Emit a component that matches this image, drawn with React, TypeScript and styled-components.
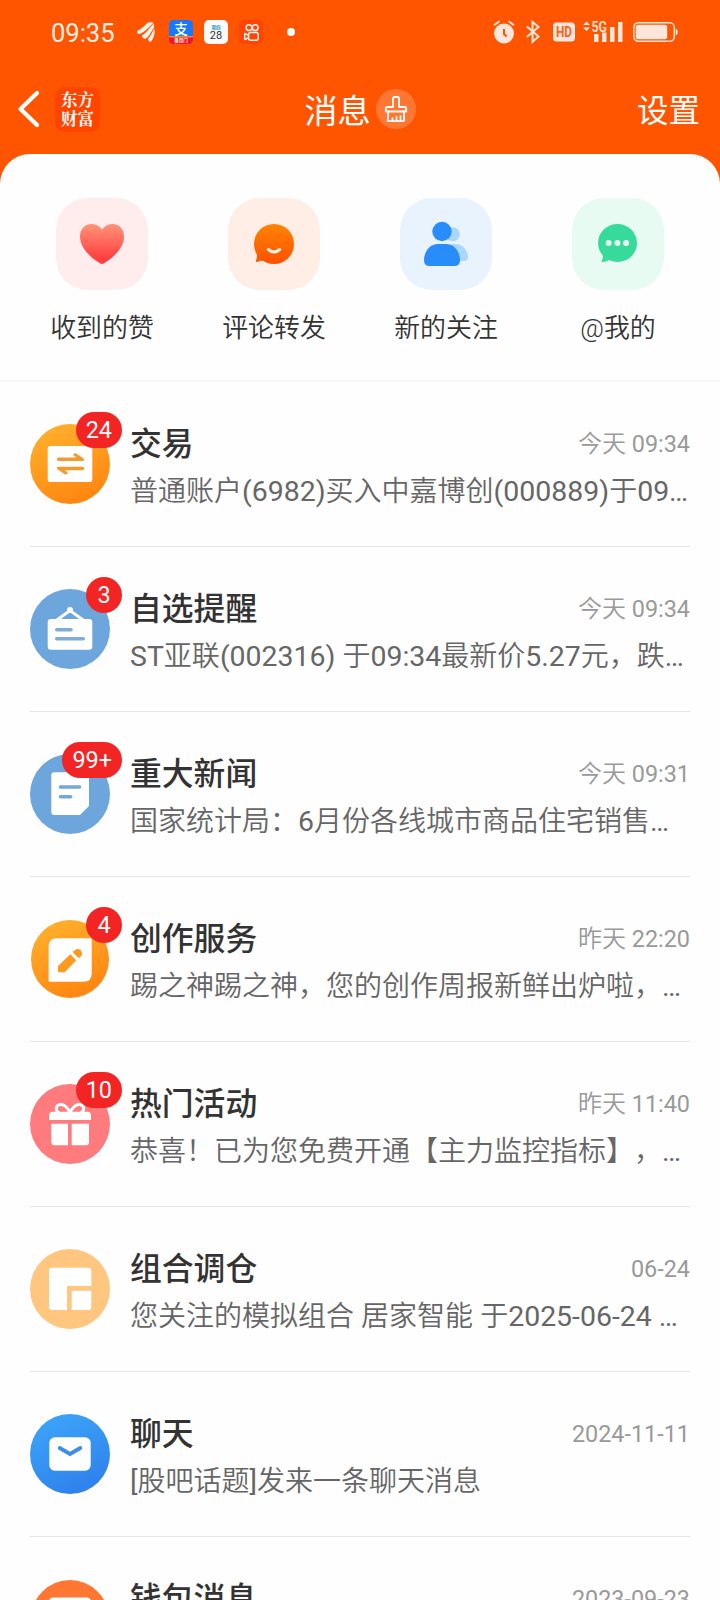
import React from 'react';
import styled, { createGlobalStyle } from 'styled-components';

const GlobalStyle = createGlobalStyle`
  * { box-sizing: border-box; }
  html, body { margin: 0; padding: 0; }
  body {
    background: #fefefe;
    font-family: Roboto, 'Noto Sans CJK SC', sans-serif;
    text-spacing-trim: space-all;
    overflow: hidden;
  }
  svg { display: block; flex: none; overflow: visible; }
`;

const Screen = styled.main`
  width: 720px;
  height: 1600px;
  overflow: hidden;
  display: flex;
  flex-direction: column;
  background: #ff5500;
`;

const StatusBar = styled.div`
  height: 64px;
  flex: none;
  display: flex;
  align-items: center;
  justify-content: space-between;
  padding: 0 42px 0 51px;
`;

const StatusGroup = styled.div<{ $gap: number }>`
  display: flex;
  align-items: center;
  gap: ${(p) => p.$gap}px;
`;

const StatusSlot = styled.span<{ $before?: number; $after?: number }>`
  padding-left: ${(p) => p.$before ?? 0}px;
  padding-right: ${(p) => p.$after ?? 0}px;
`;

const Clock = styled.span`
  width: 75px;
  font-size: 25.5px;
  line-height: 30px;
  color: #fff0e6;
  padding-top: 1px;
`;

const NavBar = styled.header`
  height: 90px;
  flex: none;
  display: grid;
  grid-template-columns: 1fr auto 1fr;
  align-items: center;
  padding: 0 20px 0 17px;
  color: #fff;
`;

const NavLeft = styled.div`
  display: flex;
  align-items: center;
  gap: 15px;
`;

const BrandLogo = styled.div`
  width: 45px;
  height: 45px;
  border-radius: 10px;
  background: #ff4400;
  display: flex;
  flex-direction: column;
  align-items: center;
  justify-content: center;
  padding-bottom: 1px;
  font: 700 16.5px/19px 'Noto Serif CJK SC', 'Noto Sans CJK SC', sans-serif;
`;

const NavTitle = styled.div`
  display: flex;
  align-items: center;
  gap: 5px;
  padding-left: 3px;
  font-size: 33.3px;
  line-height: 40px;
`;

const NavText = styled.span`
  padding-top: 5px;
`;

const BrushButton = styled.span`
  width: 40px;
  height: 40px;
  border-radius: 50%;
  background: #ff7733;
`;

const SettingsLink = styled.span`
  justify-self: end;
  padding-top: 5px;
  font-size: 31.5px;
  line-height: 40px;
`;

const Sheet = styled.section`
  flex: 1;
  min-height: 0;
  background: #fefefe;
  border-radius: 30px 30px 0 0;
  overflow: hidden;
`;

const Actions = styled.nav`
  display: grid;
  grid-template-columns: repeat(4, 172px);
  padding: 44px 16px 0;
  height: 228px;
  border-bottom: 2px solid #f6f6f6;
`;

const Action = styled.div`
  display: flex;
  flex-direction: column;
  align-items: center;
  gap: 20px;
`;

const ActionTile = styled.div<{ $bg: string }>`
  width: 92px;
  height: 92px;
  border-radius: 32px;
  background: ${(p) => p.$bg};
`;

const ActionLabel = styled.span`
  font-size: 25.9px;
  line-height: 36px;
  font-weight: 350;
  color: #333;
`;

const Row = styled.article`
  height: 165px;
  margin: 0 30px;
  padding-top: 42px;
  display: flex;
  gap: 20px;
  border-bottom: 1px solid #e6e6e6;
`;

const Avatar = styled.div`
  position: relative;
  width: 80px;
  height: 80px;
  flex: none;
`;

const Badge = styled.span`
  position: absolute;
  right: -12px;
  top: -12px;
  min-width: 36px;
  height: 36px;
  padding: 0 10px;
  border-radius: 18px;
  background: #f22424;
  color: #fff;
  font-size: 23.4px;
  line-height: 36px;
  text-align: center;
`;

const RowBody = styled.div`
  flex: 1;
  min-width: 0;
  display: flex;
  flex-direction: column;
`;

const RowHead = styled.div`
  display: flex;
  justify-content: space-between;
  align-items: center;
  height: 40px;
`;

const RowTitle = styled.h2`
  margin: 0;
  font-size: 31.8px;
  line-height: 40px;
  font-weight: 500;
  color: #333;
`;

const RowTime = styled.time`
  font-size: 24px;
  line-height: 40px;
  font-weight: 350;
  color: #999;
`;

const Preview = styled.p`
  margin: 7px 0 0;
  font-size: 28px;
  line-height: 42px;
  font-weight: 350;
  color: #666;
  white-space: pre;
`;

const Latin = styled.span<{ $size: number }>`
  font-size: ${(p) => p.$size}px;
  font-weight: 400;
`;

/* Latin letters and digits have their own size beside the Chinese text. */
const Mixed = ({ text, size }: { text: string; size: number }) => (
  <>
    {text.split(/([\x20-\x7e…]+)/).map((part, i) =>
      i % 2 ? (
        <Latin key={i} $size={size}>
          {part}
        </Latin>
      ) : (
        part
      ),
    )}
  </>
);

const pale = '#ffe6da';

const WingIcon = () => (
  <svg width="18" height="20" viewBox="0 0 18 20" fill="#fff0e8">
    <path d="M0 9C4 7.500 8 3 11 .5C13 0 15.500 .3 16.500 .8C12.500 4.500 8.500 9.500 3 12C.8 12.200 -.3 11 0 9z" />
    <path d="M5 13.500C10 10.500 12.500 5.500 16.800 1.500L17.200 5.500C14 9.500 12.500 14.500 8.500 16.800C6.500 17 4.800 15.500 5 13.500z" />
    <path d="M11 17C14 14 15 10.500 17.200 6.800L17.700 11C16.700 14 16.500 17 14 19.600C12 19.800 11 18.800 11 17z" />
  </svg>
);

const AlipayIcon = () => (
  <svg width="24" height="24" viewBox="0 0 24 24">
    <defs>
      <clipPath id="pay">
        <rect width="24" height="24" rx="4.500" />
      </clipPath>
    </defs>
    <g clipPath="url(#pay)">
      <rect width="24" height="24" fill="#1677ff" />
      <rect y="16" width="24" height="8" fill="#f5132a" />
      <path d="M0 16H24V17.200Q12 18.500 0 17.200z" fill="#f08a3c" />
      <text x="12" y="14" fontSize="13.500" fontWeight="500" fill="#fff" textAnchor="middle">支</text>
      <text x="12" y="22.300" fontSize="4.500" fontWeight="700" fill="#ffe9d0" textAnchor="middle">备用门</text>
    </g>
  </svg>
);

const CalendarIcon = () => (
  <svg width="24" height="24" viewBox="0 0 24 24">
    <rect width="24" height="24" rx="5" fill="#fafafa" />
    <text x="12" y="8.600" fontSize="4.500" fontWeight="700" fill="#1f8fc0" textAnchor="middle">周四</text>
    <text x="12" y="19" fontSize="11" fill="#333" textAnchor="middle">28</text>
  </svg>
);

const CameraIcon = () => (
  <svg width="24" height="24" viewBox="0 0 24 24" fill="none" stroke="#fff0e8" strokeWidth="1.500">
    <rect width="24" height="24" rx="5" fill="#ff4406" stroke="none" />
    <circle cx="10" cy="7.700" r="2.900" />
    <circle cx="16.200" cy="7.700" r="2.900" />
    <rect x="9.600" y="12.600" width="9.600" height="7.700" rx="2" />
    <path d="M9.500 15.200L5.700 13.500V19.500L9.500 17.800" strokeLinejoin="round" />
  </svg>
);

const DotIcon = () => (
  <svg width="8" height="8" viewBox="0 0 8 8">
    <circle cx="4" cy="4" r="4" fill="#fff" />
  </svg>
);

const AlarmIcon = () => (
  <svg width="22" height="24" viewBox="0 0 22 24">
    <circle cx="11" cy="13.500" r="10" fill={pale} />
    <path d="M1 5.200L6.500 1.200M21 5.200L15.500 1.200" stroke={pale} strokeWidth="1.800" />
    <path d="M11 9V14L13.700 16.500" stroke="#ff5500" strokeWidth="2" fill="none" />
  </svg>
);

const BluetoothIcon = () => (
  <svg width="14" height="24" viewBox="0 0 14 24" fill="none" stroke={pale} strokeWidth="2">
    <path d="M.8 6.500L12.500 16.500L6.500 21.800V2L12.500 7L.8 17" />
  </svg>
);

const HdIcon = () => (
  <svg width="22" height="20" viewBox="0 0 22 20">
    <rect y=".5" width="22" height="19" rx="3.500" fill={pale} />
    <text x="11" y="15.300" fontSize="15" fontWeight="700" fill="#f8631c" textAnchor="middle" textLength="16" lengthAdjust="spacingAndGlyphs">
      HD
    </text>
  </svg>
);

const SignalIcon = () => (
  <svg width="40" height="24" viewBox="0 0 40 24" fill={pale}>
    <path d="M0 5L3.500 1.500L7 5zM0 7.500L3.500 11L7 7.500z" />
    <text x="8.500" y="11.500" fontSize="14" fontWeight="600" textLength="15.500" lengthAdjust="spacingAndGlyphs">
      5G
    </text>
    <rect x="11" y="14" width="4.500" height="8" />
    <rect x="19" y="12.500" width="4.500" height="9.500" />
    <rect x="27" y="7" width="4.500" height="15" />
    <rect x="35" y="2" width="4.500" height="20" />
  </svg>
);

const BatteryIcon = () => (
  <svg width="45" height="20" viewBox="0 0 45 20">
    <rect x=".8" y=".8" width="40.500" height="18.400" rx="4.500" fill="none" stroke={pale} strokeWidth="1.500" />
    <rect x="2.700" y="2.700" width="31.500" height="14.600" rx="2.500" fill={pale} />
    <path d="M42.700 6.500Q44.800 7 44.800 10T42.700 13.500z" fill={pale} />
  </svg>
);

const BackIcon = () => (
  <svg width="23" height="38" viewBox="0 0 23 38" fill="none" stroke="#fff" strokeWidth="4.300" strokeLinecap="round" strokeLinejoin="round">
    <path d="M20 3L3.500 19L20 35" />
  </svg>
);

const BrushIcon = () => (
  <svg width="40" height="40" viewBox="0 0 40 40" fill="none" stroke="#fff" strokeWidth="1.800" strokeLinejoin="round" strokeLinecap="round">
    <path d="M17 18V9.500Q17 8 18.500 8H21.500Q23 8 23 9.500V18H28.500Q30.200 18 30.200 19.700V22.500H9.800V19.700Q9.800 18 11.500 18z" />
    <path d="M12.200 22.500L11.700 32.200H26.500Q28.300 32.200 28.200 30.500L27.800 22.500M16.500 31.500V29.500M20.500 31.500V28M24.500 31.500V27" />
  </svg>
);

const HeartIcon = () => (
  <svg width="92" height="92" viewBox="0 0 92 92">
    <defs>
      <linearGradient id="heart" x1="0" y1="0" x2="0" y2="1">
        <stop offset="0" stopColor="#ff9478" />
        <stop offset=".85" stopColor="#ff4040" />
      </linearGradient>
    </defs>
    <path
      d="M46 31.500C43 27.500 39 26 35.500 26C28.500 26 24 31.500 24 38.500C24 51 37 61 44 65.300Q46 66.500 48 65.300C55 61 68 51 68 38.500C68 31.500 63.500 26 56.500 26C53 26 49 27.500 46 31.500z"
      fill="url(#heart)"
    />
  </svg>
);

const SmileIcon = () => (
  <svg width="92" height="92" viewBox="0 0 92 92">
    <defs>
      <linearGradient id="smile" x1="0" y1="0" x2="0" y2="1">
        <stop offset="0" stopColor="#ff8400" />
        <stop offset="1" stopColor="#ff5000" />
      </linearGradient>
    </defs>
    <circle cx="46" cy="46" r="20" fill="url(#smile)" />
    <path d="M28.800 55.500Q29.500 59 28 62.500Q27.700 64.200 29.300 63.900Q32.500 62.500 36 63L38 58z" fill="#ff5a00" />
    <path d="M40.300 51.500Q46 56.500 51.700 51.500" fill="none" stroke="#fff0e8" strokeWidth="3" strokeLinecap="round" />
  </svg>
);

const PeopleIcon = () => (
  <svg width="92" height="92" viewBox="0 0 92 92">
    <g fill="#a8d7ff">
      <circle cx="52.700" cy="36.300" r="7" />
      <path d="M50 46H55C63 46 68 53 68 58.500Q68 63 63.500 63H50z" />
    </g>
    <g fill="#288cfa">
      <circle cx="42" cy="33.500" r="9.700" />
      <path d="M38 46H46C54.500 46 60 54 60 62Q60 68 54.500 68H29.500Q24 68 24 62C24 54 29.500 46 38 46z" />
    </g>
  </svg>
);

const ChatIcon = () => (
  <svg width="92" height="92" viewBox="0 0 92 92" fill="#36db9b">
    <ellipse cx="45.500" cy="45" rx="19.500" ry="19" />
    <path d="M30 55Q32 60 29.800 62.500Q28.800 63.800 30.200 64Q33.500 64 37 62L40 58z" />
    <g fill="#e8fbf3">
      <circle cx="36.600" cy="45" r="3" />
      <circle cx="45.400" cy="45" r="3" />
      <circle cx="54.100" cy="45" r="3" />
    </g>
  </svg>
);

const Disc = ({ fill, r = 40, children }: { fill: string | [string, string, string]; r?: number; children: React.ReactNode }) => {
  const grad = typeof fill !== 'string';
  return (
    <svg width="80" height="80" viewBox="0 0 80 80">
      {grad && (
        <defs>
          <linearGradient id={fill[0]} x1=".25" y1="0" x2=".7" y2="1">
            <stop offset="0" stopColor={fill[1]} />
            <stop offset="1" stopColor={fill[2]} />
          </linearGradient>
        </defs>
      )}
      <circle cx="40" cy="40" r={r} fill={grad ? `url(#${fill[0]})` : fill} />
      {children}
    </svg>
  );
};

const TradeIcon = () => (
  <Disc fill={['trade', '#ffb02c', '#ff8410']}>
    <rect x="17.700" y="22" width="44.600" height="36" rx="2.800" fill="#fff" />
    <g fill="#f59a2c">
      <path d="M28.600 33.500H46.500L43.600 31.600Q42.800 29.200 45.800 29.200L53.600 34.500Q54.800 36.700 53 37.100H28.600A1.800 1.800 0 0 1 28.600 33.500z" />
      <path d="M52.400 46.300H34.500L37.400 48.200Q38.200 50.600 35.200 50.600L27.400 45.300Q26.200 43.100 28 42.700H52.400A1.800 1.800 0 0 1 52.400 46.300z" />
    </g>
  </Disc>
);

const SignIcon = () => (
  <Disc fill="#6ca6dc">
    <rect x="17.700" y="30" width="44.600" height="30.700" rx="3" fill="#fff" />
    <circle cx="40" cy="21" r="3" fill="#fff" />
    <path d="M25.500 32L40 21.500L54.500 32" fill="none" stroke="#fff" strokeWidth="3" />
    <path d="M26.700 40.700H41M26.700 49.700H53.300" stroke="#7fadd8" strokeWidth="3.500" strokeLinecap="round" />
  </Disc>
);

const NewsIcon = () => (
  <Disc fill="#6ca6dc">
    <path d="M24.300 18.300H56Q59 18.300 59 21.300V52L50 61H24.300Q21.300 61 21.300 58V21.300Q21.300 18.300 24.300 18.300z" fill="#fff" />
    <path d="M30.400 33H49.600M30.400 42.700H40.700" stroke="#74a8d8" strokeWidth="3.500" strokeLinecap="round" />
  </Disc>
);

const CreateIcon = () => (
  <Disc fill={['create', '#ffb02c', '#ff8410']} r={39}>
    <path d="M27 19.300H60.500Q61.700 19.300 61.700 20.500V54.500Q61.700 62.700 53.500 62.700H19.800Q18.600 62.700 18.600 61.500V27.500Q18.600 19.300 27 19.300z" fill="#fff" />
    <g fill="#ff9a20">
      <path d="M28 53.300V47L40.300 35.300L46.300 41.300L34.700 53.300z" />
      <path d="M42.500 33L45.300 30.700Q48.300 29 50.800 31.500Q53.200 34.500 51.200 37L48.800 39.200z" />
    </g>
  </Disc>
);

const GiftIcon = () => (
  <Disc fill="#ff7b7e">
    <g fill="#fff">
      <path d="M22.500 27.700H57.500Q61 27.700 61 31.500V36H19V31.500Q19 27.700 22.500 27.700z" />
      <path d="M21.300 39.700H38V61.300H24.300Q21.300 61.300 21.300 58.300zM41.700 39.700H59V58.300Q59 61.300 56 61.300H41.700z" />
    </g>
    <path
      d="M40 28.500C37 22.500 33.500 20 30 20.500C25.500 21.500 25 26.500 29 29M40 28.500C43 22.500 46.500 20 50 20.500C54.500 21.500 55 26.500 51 29"
      fill="none"
      stroke="#fff"
      strokeWidth="3"
    />
  </Disc>
);

const PortfolioIcon = () => (
  <Disc fill="#ffc680">
    <g fill="#fff">
      <path d="M22 18.700H58.300Q61.300 18.700 61.300 21.700V37H37V61H22Q19 61 19 58V21.700Q19 18.700 22 18.700z" />
      <path d="M41.700 41.700H61.300V58Q61.300 61 58.300 61H41.700z" />
    </g>
  </Disc>
);

const MailIcon = () => (
  <Disc fill={['mail', '#3ca4f8', '#2f80ec']}>
    <rect x="19.300" y="23.300" width="41.400" height="33.400" rx="5.500" fill="#fff" />
    <path d="M29.700 34L40 40L50.300 34" fill="none" stroke="#3b8fe4" strokeWidth="3.800" strokeLinecap="round" />
  </Disc>
);

const WalletIcon = () => (
  <Disc fill="#ff7733" r={39}>
    <rect x="19" y="18.500" width="42" height="40" rx="4" fill="#fff" />
  </Disc>
);

const actions = [
  { label: '收到的赞', bg: '#ffeded', Icon: HeartIcon },
  { label: '评论转发', bg: '#ffeee5', Icon: SmileIcon },
  { label: '新的关注', bg: '#e8f3fe', Icon: PeopleIcon },
  { label: '@我的', bg: '#e8fbf3', Icon: ChatIcon },
];

const messages = [
  { title: '交易', time: '今天 09:34', text: '普通账户(6982)买入中嘉博创(000889)于09…', badge: '24', Icon: TradeIcon },
  { title: '自选提醒', time: '今天 09:34', text: 'ST亚联(002316) 于09:34最新价5.27元，跌…', badge: '3', Icon: SignIcon },
  { title: '重大新闻', time: '今天 09:31', text: '国家统计局：6月份各线城市商品住宅销售…', badge: '99+', Icon: NewsIcon },
  { title: '创作服务', time: '昨天 22:20', text: '踢之神踢之神，您的创作周报新鲜出炉啦，…', badge: '4', Icon: CreateIcon },
  { title: '热门活动', time: '昨天 11:40', text: '恭喜！已为您免费开通【主力监控指标】，…', badge: '10', Icon: GiftIcon },
  { title: '组合调仓', time: '06-24', text: '您关注的模拟组合 居家智能 于2025-06-24 …', Icon: PortfolioIcon },
  { title: '聊天', time: '2024-11-11', text: '[股吧话题]发来一条聊天消息', Icon: MailIcon },
  { title: '钱包消息', time: '2023-09-23', text: '', Icon: WalletIcon },
];

export default function App() {
  return (
    <Screen>
      <GlobalStyle />
      <StatusBar>
        <StatusGroup $gap={11}>
          <Clock>09:35</Clock>
          <StatusSlot $after={3}>
            <WingIcon />
          </StatusSlot>
          <AlipayIcon />
          <CalendarIcon />
          <CameraIcon />
          <StatusSlot $before={13}>
            <DotIcon />
          </StatusSlot>
        </StatusGroup>
        <StatusGroup $gap={8}>
          <AlarmIcon />
          <StatusSlot $before={3} $after={5}>
            <BluetoothIcon />
          </StatusSlot>
          <HdIcon />
          <StatusSlot $after={2}>
            <SignalIcon />
          </StatusSlot>
          <BatteryIcon />
        </StatusGroup>
      </StatusBar>
      <NavBar>
        <NavLeft>
          <BackIcon />
          <BrandLogo>
            <span>东方</span>
            <span>财富</span>
          </BrandLogo>
        </NavLeft>
        <NavTitle>
          <NavText>消息</NavText>
          <BrushButton>
            <BrushIcon />
          </BrushButton>
        </NavTitle>
        <SettingsLink>设置</SettingsLink>
      </NavBar>
      <Sheet>
        <Actions>
          {actions.map(({ label, bg, Icon }) => (
            <Action key={label}>
              <ActionTile $bg={bg}>
                <Icon />
              </ActionTile>
              <ActionLabel>{label}</ActionLabel>
            </Action>
          ))}
        </Actions>
        {messages.map(({ title, time, text, badge, Icon }) => (
          <Row key={title}>
            <Avatar>
              <Icon />
              {badge && <Badge>{badge}</Badge>}
            </Avatar>
            <RowBody>
              <RowHead>
                <RowTitle>{title}</RowTitle>
                <RowTime>
                  <Mixed text={time} size={23.4} />
                </RowTime>
              </RowHead>
              <Preview>
                <Mixed text={text} size={28.45} />
              </Preview>
            </RowBody>
          </Row>
        ))}
      </Sheet>
    </Screen>
  );
}
